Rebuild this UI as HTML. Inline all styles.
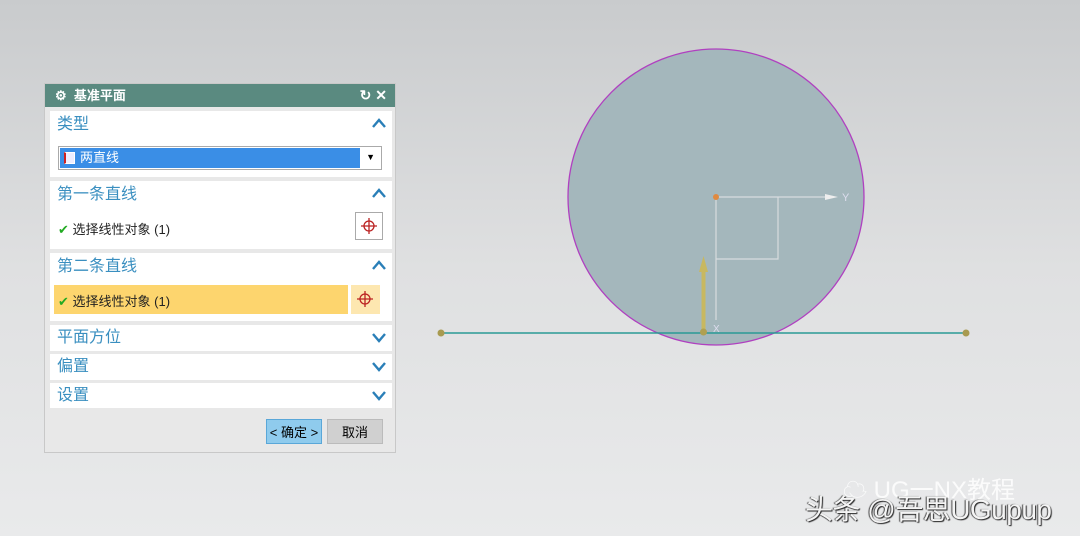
<!DOCTYPE html>
<html><head><meta charset="utf-8"><style>
body{margin:0;width:1080px;height:536px;overflow:hidden;background:linear-gradient(#c9cbcd,#dfe0e1 50%,#e9eaeb);font-family:"Liberation Sans","Noto Sans CJK SC",sans-serif;position:relative}
.dlg{position:absolute;left:44px;top:83px;width:352px;height:370px;background:#e8e8e8;border:1px solid #c8c8c8;box-sizing:border-box}
.tb{height:23px;background:#5a8a80;color:#fff;font-size:13px;line-height:23px;padding-left:10px;font-weight:bold}
.sec{position:absolute;left:5px;width:342px;background:#fff}
.h{position:absolute;left:7px;top:3px;font-size:16px;color:#3a8fc0;line-height:22px}
.car{position:absolute;right:6px;top:7px}
.row{position:absolute;font-size:13px;color:#222}
.btn{position:absolute;top:335px;height:25px;font-size:13px;line-height:25px;text-align:center;box-sizing:border-box}
.tgt{position:absolute;width:28px;height:28px;box-sizing:border-box}
</style></head><body>
<div class="dlg">
<div class="tb">⚙&nbsp; 基准平面<span style="position:absolute;right:8px;font-size:14px">↻ ✕</span></div>
<div class="sec" style="top:27px;height:66px"><div class="h">类型</div><svg class="car" width="14" height="10"><path d="M1 9L7 2L13 9" fill="none" stroke="#2a7fb8" stroke-width="2.4"/></svg>
<div style="position:absolute;left:8px;top:35px;width:324px;height:24px;border:1px solid #aaa;box-sizing:border-box;background:#fff">
<div style="position:absolute;left:1px;top:1px;width:300px;height:20px;background:#3a8ee6;color:#fff;font-size:13px;line-height:20px;padding-left:20px;box-sizing:border-box">两直线<span style="position:absolute;left:4px;top:4px;width:8px;height:10px;border:1px solid #fff;border-left:2px solid #c22;background:#eef"></span></div>
<span style="position:absolute;right:6px;top:5px;font-size:9px">▼</span></div></div>
<div class="sec" style="top:97px;height:68px"><div class="h">第一条直线</div><svg class="car" width="14" height="10"><path d="M1 9L7 2L13 9" fill="none" stroke="#2a7fb8" stroke-width="2.4"/></svg>
<div class="row" style="left:8px;top:38px"><span style="color:#2a2">✔</span> 选择线性对象 (1)</div>
<div class="tgt" style="left:305px;top:31px;border:1px solid #aaa"><svg width="26" height="26"><circle cx="13" cy="13" r="5" fill="none" stroke="#b22" stroke-width="1.3"/><path d="M13 5V21M5 13H21" stroke="#b22" stroke-width="1.3"/></svg></div></div>
<div class="sec" style="top:169px;height:68px"><div class="h">第二条直线</div><svg class="car" width="14" height="10"><path d="M1 9L7 2L13 9" fill="none" stroke="#2a7fb8" stroke-width="2.4"/></svg>
<div style="position:absolute;left:4px;top:32px;width:294px;height:29px;background:#fdd56e"></div>
<div class="row" style="left:8px;top:38px"><span style="color:#2a2">✔</span> 选择线性对象 (1)</div>
<div class="tgt" style="left:301px;top:32px;background:#fde7b0;width:29px;height:29px"><svg width="29" height="29"><circle cx="14" cy="14" r="5" fill="none" stroke="#b22" stroke-width="1.3"/><path d="M14 6V22M6 14H22" stroke="#b22" stroke-width="1.3"/></svg></div></div>
<div class="sec" style="top:241px;height:26px"><div class="h" style="top:2px">平面方位</div><svg class="car" style="top:8px" width="14" height="10"><path d="M1 1L7 8L13 1" fill="none" stroke="#2a7fb8" stroke-width="2.4"/></svg></div>
<div class="sec" style="top:270px;height:26px"><div class="h" style="top:2px">偏置</div><svg class="car" style="top:8px" width="14" height="10"><path d="M1 1L7 8L13 1" fill="none" stroke="#2a7fb8" stroke-width="2.4"/></svg></div>
<div class="sec" style="top:299px;height:25px"><div class="h" style="top:2px">设置</div><svg class="car" style="top:8px" width="14" height="10"><path d="M1 1L7 8L13 1" fill="none" stroke="#2a7fb8" stroke-width="2.4"/></svg></div>
<div class="btn" style="left:221px;width:56px;background:#8fcbed;border:1px solid #5aa7d8">&lt; 确定 &gt;</div>
<div class="btn" style="left:282px;width:56px;background:#d0d0d0;border:1px solid #bbb">取消</div>
</div>
<svg style="position:absolute;left:0;top:0" width="1080" height="536">
<circle cx="716" cy="197" r="148" fill="#a4b7bc" stroke="#b040c0" stroke-width="1.3"/>
<path d="M716 197H825M716 197V320M716 259H778V197" stroke="#d8dcde" fill="none" stroke-width="1.2"/>
<path d="M825 194L838 197L825 200Z" fill="#eee"/>
<text x="842" y="201" font-size="11" fill="#dde">Y</text><text x="713" y="332" font-size="10" fill="#dde">X</text>
<circle cx="716" cy="197" r="3" fill="#e08a40"/>
<line x1="441" y1="333" x2="966" y2="333" stroke="#2a9a95" stroke-width="1.6"/>
<circle cx="441" cy="333" r="3.5" fill="#a89a50"/><circle cx="966" cy="333" r="3.5" fill="#a89a50"/>
<rect x="701.5" y="270" width="4" height="62" fill="#c8b860"/><path d="M699 272L703.5 256L708 272Z" fill="#c8b860"/>
<circle cx="703.5" cy="332" r="3.5" fill="#b0a050"/>
</svg>
<div style="position:absolute;left:843px;top:470px;font-size:24px;color:#fff;opacity:.85">☁ UG一NX教程</div>
<div style="position:absolute;left:805px;top:488px;font-size:28px;color:#f4f4f4;text-shadow:1px 1px 1px #222,-1px 0 1px #444;letter-spacing:-0.5px">头条 @吾思UGupup</div>
</body></html>
